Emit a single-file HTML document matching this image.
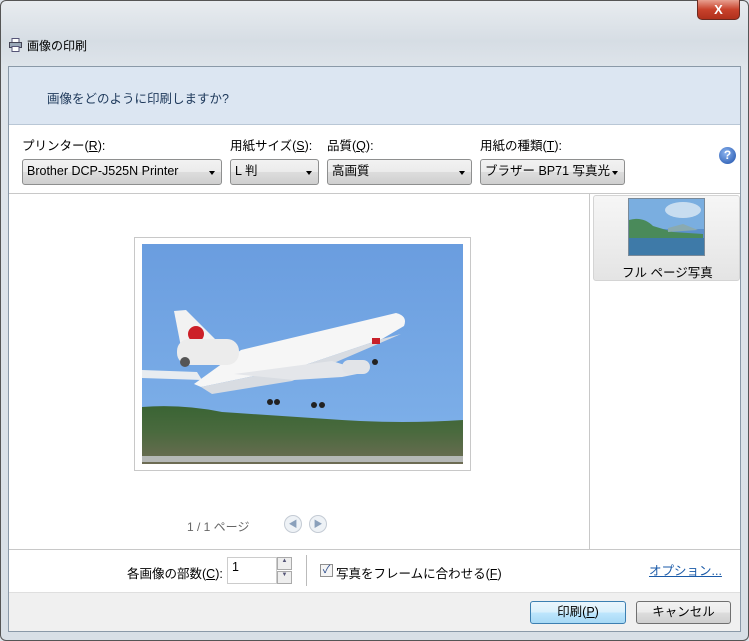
<!DOCTYPE html>
<html><head><meta charset="utf-8"><style>
*{margin:0;padding:0;box-sizing:border-box}
body{width:749px;height:641px;overflow:hidden;background:#dde3ea;font-family:"Liberation Sans","Noto Sans CJK JP",sans-serif;font-size:12px;color:#000;position:relative}
.abs{position:absolute}
.frame{left:0;top:0;width:749px;height:641px;background:linear-gradient(180deg,#e8ecf0 0,#d6dde4 40px,#dfe5eb 70px,#d8dfe6 100%);border:1px solid #555;border-radius:6px}
.close{left:697px;top:0;width:43px;height:20px;background:linear-gradient(#e8a090,#c8422c 50%,#b0301c);border:1px solid #6b2a20;border-top:none;border-radius:0 0 5px 5px;color:#fff;font-weight:bold;text-align:center;line-height:19px;font-size:13px}
.content{left:8px;top:66px;width:733px;height:566px;background:#fff;border:1px solid #8a99a8}
.header{left:9px;top:67px;width:731px;height:58px;background:#dce6f2;border-bottom:1px solid #b9c7d6}
.sel{height:26px;border:1px solid #8e8f8f;border-radius:3px;background:linear-gradient(#f2f2f2,#ebebeb 50%,#dddddd 50%,#cfcfcf);padding-left:4px;line-height:23px;font-size:12.5px}
.sel:after{content:"";position:absolute;right:6px;top:11px;border-left:3.5px solid transparent;border-right:3.5px solid transparent;border-top:4px solid #000}
.btn{height:23px;border:1px solid #707070;border-radius:3px;background:linear-gradient(#f2f2f2,#ebebeb 50%,#dddddd 50%,#cfcfcf);text-align:center;line-height:21px;font-size:12.5px}
</style></head><body>
<div class="abs frame"></div>
<div class="abs close">X</div>
<svg class="abs" style="left:9px;top:38px" width="13" height="14"><rect x="3" y="0.5" width="7" height="4" fill="#fff" stroke="#557"/><rect x="0.5" y="4.5" width="12" height="5" fill="#9aa8b8" stroke="#445"/><rect x="3" y="8.5" width="7" height="5" fill="#fff" stroke="#557"/></svg>
<div class="abs" style="left:27px;top:37px;font-size:12px">画像の印刷</div>
<div class="abs content"></div>
<div class="abs header"></div>
<div class="abs" style="left:47px;top:88px;font-size:12.5px;color:#1e395b">画像をどのように印刷しますか?</div>

<div class="abs" style="left:22px;top:135px;font-size:12.5px">プリンター(<u>R</u>):</div>
<div class="abs" style="left:230px;top:135px;font-size:12.5px">用紙サイズ(<u>S</u>):</div>
<div class="abs" style="left:327px;top:135px;font-size:12.5px">品質(<u>Q</u>):</div>
<div class="abs" style="left:480px;top:135px;font-size:12.5px">用紙の種類(<u>T</u>):</div>
<div class="abs sel" style="left:22px;top:159px;width:200px">Brother DCP-J525N Printer</div>
<div class="abs sel" style="left:230px;top:159px;width:89px">L 判</div>
<div class="abs sel" style="left:327px;top:159px;width:145px">高画質</div>
<div class="abs sel" style="left:480px;top:159px;width:145px">ブラザー BP71 写真光</div>
<div class="abs" style="left:719px;top:147px;width:17px;height:17px;border-radius:50%;background:radial-gradient(circle at 40% 35%,#8cb4f0,#1c4fa8);color:#fff;font-weight:bold;font-size:12px;text-align:center;line-height:17px">?</div>

<div class="abs" style="left:9px;top:193px;width:731px;height:1px;background:#c8c8c8"></div>
<div class="abs" style="left:589px;top:194px;width:1px;height:356px;background:#c8c8c8"></div>
<div class="abs" style="left:593px;top:195px;width:147px;height:86px;background:linear-gradient(#f6f6f6,#e4e4e4);border:1px solid #d4d4d4;border-radius:3px"></div>
<svg class="abs" style="left:628px;top:198px" width="77" height="58"><rect x="0" y="0" width="77" height="58" fill="#5b90cc"/><rect x="1" y="1" width="75" height="30" fill="#7aaee0"/><ellipse cx="55" cy="12" rx="18" ry="8" fill="#dce9f4" opacity=".8"/><path d="M1 22 Q15 18 25 28 L45 34 L75 36 L75 42 L1 42Z" fill="#4a8a5a"/><path d="M40 30 L55 26 L70 32 L40 34Z" fill="#8aaab0"/><rect x="1" y="40" width="75" height="17" fill="#3e7aa8"/><rect x="0.5" y="0.5" width="76" height="57" fill="none" stroke="#7a8a99"/></svg>
<div class="abs" style="left:622px;top:262px;font-size:12.5px">フル ページ写真</div>

<div class="abs" style="left:134px;top:237px;width:337px;height:234px;background:#fff;border:1px solid #c8c8c8"></div>
<svg class="abs" style="left:142px;top:244px" width="321" height="220">
<defs><linearGradient id="sky" x1="0" y1="0" x2="0" y2="1"><stop offset="0" stop-color="#6a9ddf"/><stop offset="1" stop-color="#80b2ea"/></linearGradient>
<linearGradient id="tr" x1="0" y1="0" x2="0" y2="1"><stop offset="0" stop-color="#3a6434"/><stop offset=".45" stop-color="#4a6a3e"/><stop offset="1" stop-color="#6e6c54"/></linearGradient></defs>
<rect width="321" height="220" fill="url(#sky)"/>
<path d="M0 163 Q40 160 80 168 Q140 172 200 176 Q260 180 321 176 L321 220 L0 220Z" fill="url(#tr)"/>
<rect x="0" y="212" width="321" height="6" fill="#c8ccd0" opacity=".8"/>
<path d="M0 126 L55 128 L60 136 L0 134Z" fill="#e8ecf0"/>
<path d="M52 140 L99 106 L254 69 Q266 72 262 82 L240 95 L160 122 L59 143Z" fill="#f6f6f6"/>
<path d="M59 143 L160 122 L240 95 L259 90 L150 137 L70 150Z" fill="#d8dce2"/>
<path d="M32 67 L44 66 L74 96 L39 103Z" fill="#f2f2f2"/>
<circle cx="54" cy="90" r="8" fill="#cc2028"/>
<rect x="35" y="95" width="62" height="26" rx="12" fill="#ececec"/>
<circle cx="43" cy="118" r="5" fill="#555"/>
<path d="M92 130 L190 117 L225 128 L200 133 L152 136Z" fill="#e4e6ea"/>
<rect x="200" y="116" width="28" height="14" rx="7" fill="#e2e4e8"/>
<circle cx="128" cy="158" r="3" fill="#222"/><circle cx="135" cy="158" r="3" fill="#222"/>
<circle cx="172" cy="161" r="3" fill="#222"/><circle cx="180" cy="161" r="3" fill="#222"/>
<circle cx="233" cy="118" r="3" fill="#222"/>
<rect x="230" y="94" width="8" height="6" fill="#c8202a"/>
</svg>

<div class="abs" style="left:187px;top:518px;color:#666;font-size:12px">1 / 1 ページ</div>
<div class="abs" style="left:284px;top:515px;width:18px;height:18px;border-radius:50%;border:1px solid #c4cbd4;background:#eef2f6;color:#8aa0bb;font-size:9px;text-align:center;line-height:16px">◀</div>
<div class="abs" style="left:309px;top:515px;width:18px;height:18px;border-radius:50%;border:1px solid #c4cbd4;background:#eef2f6;color:#8aa0bb;font-size:9px;text-align:center;line-height:16px">▶</div>

<div class="abs" style="left:9px;top:549px;width:731px;height:1px;background:#c8c8c8"></div>
<div class="abs" style="left:127px;top:563px;font-size:12.5px">各画像の部数(<u>C</u>):</div>
<div class="abs" style="left:227px;top:557px;width:50px;height:27px;border:1px solid #ccc;padding:2px 4px;font-size:12.5px">1</div>
<div class="abs" style="left:277px;top:557px;width:15px;height:13px;border:1px solid #aaa;background:#eee;font-size:6px;text-align:center;color:#557">▲</div>
<div class="abs" style="left:277px;top:571px;width:15px;height:13px;border:1px solid #aaa;background:#eee;font-size:6px;text-align:center;color:#557">▼</div>
<div class="abs" style="left:306px;top:555px;width:1px;height:31px;background:#bbb"></div>
<div class="abs" style="left:320px;top:564px;width:13px;height:13px;border:1px solid #8f8f8f;background:#f4f4f4;font-size:11px;line-height:11px;text-align:center;color:#2a4a8a">✓</div>
<div class="abs" style="left:336px;top:563px;font-size:12.5px">写真をフレームに合わせる(<u>F</u>)</div>
<div class="abs" style="left:649px;top:560px;font-size:12.5px;color:#1a5aa8;text-decoration:underline">オプション...</div>

<div class="abs" style="left:9px;top:592px;width:731px;height:39px;background:#f0f0f0;border-top:1px solid #dfdfdf"></div>
<div class="abs btn" style="left:530px;top:601px;width:96px;border-color:#3c7fb1;background:linear-gradient(#eaf6fd,#d9f0fc 50%,#bee6fd 50%,#a7d9f5)">印刷(<u>P</u>)</div>
<div class="abs btn" style="left:636px;top:601px;width:95px">キャンセル</div>
</body></html>
